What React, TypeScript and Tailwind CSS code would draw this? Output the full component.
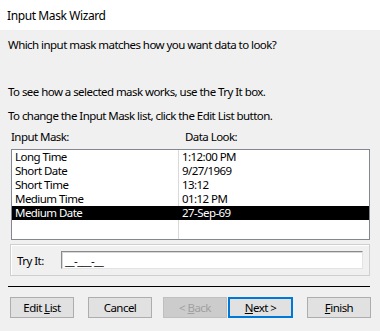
import React from "react";

const rows = [
  ["Long Time", "1:12:00 PM"],
  ["Short Date", "9/27/1969"],
  ["Short Time", "13:12"],
  ["Medium Time", "01:12 PM"],
  ["Medium Date", "27-Sep-69"],
];

function Btn({
  children,
  className = "",
}: {
  children: React.ReactNode;
  className?: string;
}) {
  return (
    <div
      className={
        "h-[21px] w-[64px] flex items-center justify-center border " + className
      }
    >
      {children}
    </div>
  );
}

export default function App() {
  return (
    <div
      className="w-[380px] h-[331px] bg-[#f0f0f0] text-black text-[11.5px] tracking-[-0.55px] leading-[15px] overflow-hidden flex flex-col"
      style={{ fontFamily: '"Noto Sans", "Open Sans", sans-serif' }}
    >
      <div className="h-[30px] bg-white flex items-center pl-[7px] shrink-0 text-[12px] tracking-[-0.4px]">
        Input Mask Wizard
      </div>
      <div className="pl-[8px] mt-[7px]">
        Which input mask matches how you want data to look?
      </div>
      <div className="pl-[8px] mt-[32px]">
        To see how a selected mask works, use the Try It box.
      </div>
      <div className="pl-[8px] mt-[9px]">
        To change the Input Mask list, click the Edit List button.
      </div>
      <div className="flex mt-[6px]">
        <div className="pl-[11px] w-[185px]">Input Mask:</div>
        <div>Data Look:</div>
      </div>
      <div className="ml-[11px] mt-[5px] w-[359px] h-[91px] border border-[#828790] bg-white flex flex-col">
        {rows.map(([a, b], i) => {
          const sel = i === 4;
          return (
            <div
              key={a}
              className={
                "flex h-[14px] leading-[14px] " +
                (sel ? "bg-black text-white" : "")
              }
            >
              <div
                className={
                  "w-[167px] pl-[3px] border-r " +
                  (sel ? "border-black" : "border-[#d9d9d9]")
                }
              >
                {a}
              </div>
              <div className="pl-[3px]">{b}</div>
            </div>
          );
        })}
        <div className="flex flex-1">
          <div className="w-[167px] border-r border-[#d9d9d9]" />
        </div>
      </div>
      <div className="ml-[10px] mt-[4px] w-[360px] h-[32px] border border-[#cfcfcf] shadow-[inset_1px_1px_0_#ffffff] flex items-center">
        <div className="pl-[6px] w-[50px]">Try It:</div>
        <div className="w-[302px] h-[18px] bg-white border-t border-l border-[#8a8a8a] border-r border-b border-r-[#e3e3e3] border-b-[#e3e3e3] shadow-[inset_1px_1px_0_#d8d8d8] flex items-end pl-[3px] leading-[15px]">
          __-___-__
        </div>
      </div>
      <div className="ml-[8px] mt-[10px] w-[362px] h-px bg-black" />
      <div className="flex mt-[10px] pl-[10px]">
        <Btn className="bg-[#e1e1e1] border-[#adadad]">
          Edit&nbsp;<span className="underline">L</span>ist
        </Btn>
        <Btn className="ml-[14px] bg-[#e1e1e1] border-[#adadad]">Cancel</Btn>
        <Btn className="ml-[11px] bg-[#cccccc] border-[#bfbfbf] text-[#a0a0a0]">
          &lt;&nbsp;<span className="underline">B</span>ack
        </Btn>
        <Btn className="ml-[1px] w-[65px] bg-[#e1e1e1] border-2 border-[#0078d7]">
          <span className="underline">N</span>ext&nbsp;&gt;
        </Btn>
        <Btn className="ml-[14px] w-[63px] bg-[#e1e1e1] border-[#adadad]">
          <span className="underline">F</span>inish
        </Btn>
      </div>
    </div>
  );
}
